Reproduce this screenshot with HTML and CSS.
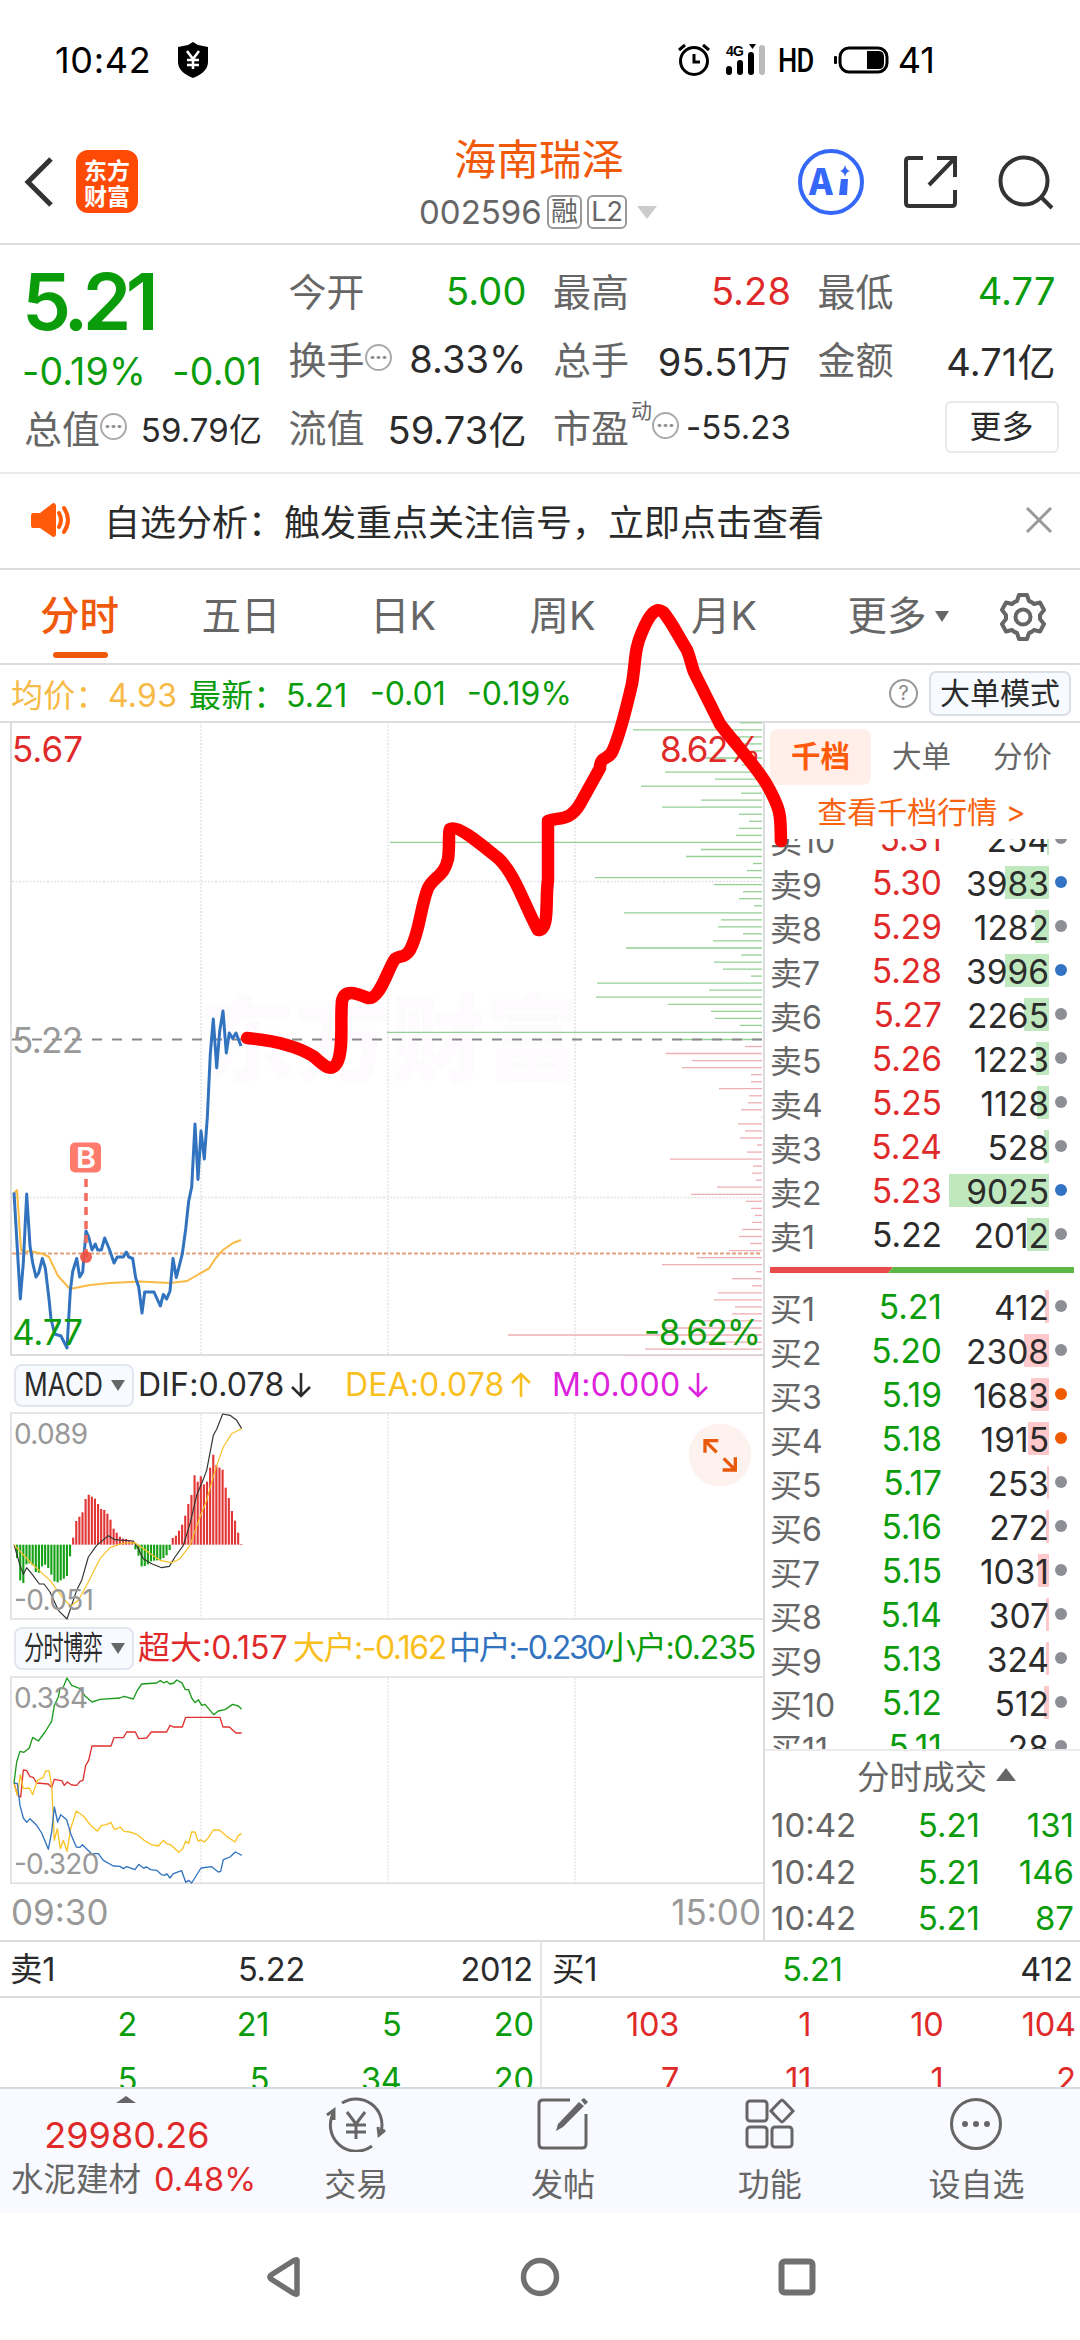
FILE: index.html
```html
<!DOCTYPE html>
<html lang="zh-CN">
<head>
    <meta charset="UTF-8" />
    <meta name="viewport" content="width=device-width, initial-scale=1" />
    <title>海南瑞泽 002596</title>
    <link rel="stylesheet" href="styles.css">
</head>
<body>
<div class="phone">
    <div class="statusbar">
        <div class="status-left">
            <span class="clock">10:42</span>
            <svg width="32" height="36" viewBox="0 0 32 36"><path d="M16 0 L21 3 L31 5 V20 Q31 30 16 36 Q1 30 1 20 V5 L11 3 Z" fill="#000"/><path d="M10 9 L16 17 L22 9 M16 17 V27 M10 18 H22 M10 23 H22" stroke="#fff" stroke-width="2.6" fill="none"/></svg>
        </div>
        <div class="status-right">
            <svg width="34" height="34" viewBox="0 0 34 34" fill="none" stroke="#000" stroke-width="3"><circle cx="17" cy="18" r="13.5"/><path d="M17 11 V19 H23 M2 7 L8 2 M32 7 L26 2"/></svg>
            <svg class="signal" width="42" height="32" viewBox="0 0 42 32"><text x="1" y="12" font-size="14" font-weight="700" textLength="18">4G</text><path d="M24 0 H31 L27.500 5 Z"/><rect x="1" y="22" width="6" height="9" rx="3"/><rect x="12" y="16" width="6" height="15" rx="3"/><rect x="23" y="8" width="6" height="23" rx="3"/><rect x="34" y="1" width="6" height="30" rx="3" fill="#bbb"/></svg>
            <span class="hd">HD</span>
            <svg width="56" height="30" viewBox="0 0 56 30"><rect x="6" y="3" width="47" height="24" rx="9" fill="none" stroke="#000" stroke-width="3"/><path d="M33 6 H45 Q50 6 50 12 V18 Q50 24 45 24 H33 Z"/><rect x="0" y="11" width="3" height="8" rx="1"/></svg>
            <span class="battery">41</span>
        </div>
    </div>

    <div class="titlebar">
        <div class="title-left">
            <svg width="32" height="52" viewBox="0 0 32 52"><path d="M29 3 L6 26 L29 49" fill="none" stroke="#333" stroke-width="5"/></svg>
            <div class="logo"><span>东方</span><span>财富</span></div>
        </div>
        <div class="title-mid">
            <div class="stock-name">海南瑞泽</div>
            <div class="stock-code"><span class="code">002596</span><span class="tag">融</span><span class="tag l2">L2</span><i class="tri-down light"></i></div>
        </div>
        <div class="title-right">
            <svg width="66" height="66" viewBox="0 0 66 66"><circle cx="33" cy="33" r="31" fill="none" stroke="#3568f8" stroke-width="4"/><text x="11" y="46" class="ai" font-size="36">A</text><path d="M43 30 h7 l-1 16 h-8 Z" fill="#3568f8"/><path d="M47 16 Q48 21 52 22 Q48 23 47 28 Q46 23 42 22 Q46 21 47 16 Z" fill="#3568f8"/></svg>
            <svg width="56" height="56" viewBox="0 0 56 56" fill="none" stroke="#333" stroke-width="4"><path d="M20 4 H6 Q3 4 3 7 V49 Q3 52 6 52 H49 Q52 52 52 49 V36 M34 4 H52 V23 M52 4 L26 31"/></svg>
            <svg width="56" height="56" viewBox="0 0 56 56" fill="none" stroke="#333" stroke-width="4"><circle cx="26" cy="27" r="23.500"/><path d="M43 43 L54 54"/></svg>
        </div>
    </div>

    <div class="stats">
        <div class="stats-col">
            <div class="price">5.21</div>
            <div class="change"><span>-0.19%</span><span>-0.01</span></div>
            <div class="stat"><span class="label">总值<i class="dots"></i></span><b class="small">59.79亿</b></div>
        </div>
        <div class="stats-col">
            <div class="stat"><span class="label">今开</span><b class="green">5.00</b></div>
            <div class="stat"><span class="label">换手<i class="dots"></i></span><b>8.33%</b></div>
            <div class="stat"><span class="label">流值</span><b>59.73亿</b></div>
        </div>
        <div class="stats-col">
            <div class="stat"><span class="label">最高</span><b class="red">5.28</b></div>
            <div class="stat"><span class="label">总手</span><b>95.51万</b></div>
            <div class="stat"><span class="label">市盈<sup>动</sup><i class="dots"></i></span><b class="small">-55.23</b></div>
        </div>
        <div class="stats-col">
            <div class="stat"><span class="label">最低</span><b class="green">4.77</b></div>
            <div class="stat"><span class="label">金额</span><b>4.71亿</b></div>
            <div class="stat end"><span class="more-btn">更多</span></div>
        </div>
    </div>

    <div class="notice">
        <svg width="42" height="36" viewBox="0 0 42 36"><path d="M2 11 H9 L22 1 Q25 1 25 4 V32 Q25 35 22 35 L9 26 H2 Q0 26 0 23 V14 Q0 11 2 11 Z" fill="#ff5a0a"/><path d="M28 11 Q32 18 28 25 M33 6 Q41 18 33 30" fill="none" stroke="#ff5a0a" stroke-width="4" stroke-linecap="round"/></svg>
        <span>自选分析：触发重点关注信号，立即点击查看</span>
        <svg width="28" height="28" viewBox="0 0 28 28"><path d="M2 2 L26 26 M26 2 L2 26" stroke="#999" stroke-width="3"/></svg>
    </div>

    <div class="tabs">
        <span class="tab active">分时</span>
        <span class="tab">五日</span>
        <span class="tab">日K</span>
        <span class="tab">周K</span>
        <span class="tab">月K</span>
        <span class="tab more">更多<i class="tri-down"></i></span>
        <svg class="gear" width="50" height="50" viewBox="0 0 50 50" fill="none" stroke="#666" stroke-width="4" stroke-linejoin="round"><path d="M21 3 H29 L31 9 Q34 10 36 12 L42 10.500 L46 18 L42 23 V27 L46 32 L42 39.500 L36 38 Q34 40 31 41 L29 47 H21 L19 41 Q16 40 14 38 L8 39.500 L4 32 L8 27 V23 L4 18 L8 10.500 L14 12 Q16 10 19 9 Z"/><circle cx="25" cy="25" r="7.500"/></svg>
    </div>

    <div class="infobar">
        <span class="avg">均价：4.93</span>
        <span class="last">最新：5.21</span>
        <span class="green diff">-0.01</span>
        <span class="green">-0.19%</span>
        <span class="help">?</span>
        <span class="mode-btn">大单模式</span>
    </div>

    <div class="board">
        <div class="charts">
            <svg class="chart" width="763" height="635" viewBox="0 722 763 635">
                <text class="watermark" x="200" y="1076" textLength="380">东方财富</text>
                <path class="frame" d="M11 722 V1356 H763"/>
                <path class="grid" d="M201 723 V1356 M388 723 V1356 M575 723 V1356 M12 882.500 H763 M12 1198.500 H763"/>
                <g id="depth"></g>
                <path d="M12 1040.500 H762" stroke="#888" stroke-width="2" stroke-dasharray="10 10"/>
                <path d="M12 1254.500 H762" stroke="#e2a27c" stroke-width="2" stroke-dasharray="4 2"/>
                <polyline class="line" stroke="#f9ba45" stroke-width="2" points="14,1194 17,1191 21,1251 25,1253 30,1252 43,1255 49,1258 58,1277 70,1290 90,1286 110,1284 140,1282.500 170,1284 187,1282 199,1275 209,1269.500 215,1260 223,1251 233,1244 241,1241"/>
                <polyline class="line" stroke="#3273bf" stroke-width="3" points="14,1193.500 20.300,1300 23.300,1264 26.700,1195 30,1247 32.700,1264 36,1278 38.700,1274 42.300,1259.500 45.300,1269 49,1300 51,1320 54.700,1335 61,1337 67,1349 70.300,1292 72.700,1272.500 76.700,1259.500 79.700,1278 82.700,1273 86,1232 88.700,1238 92,1251 95.300,1245 97.700,1251 101.300,1251 104.700,1239 109.300,1250 114,1264 117.300,1258 123.300,1258 126.300,1253 128.700,1258 132.700,1259.500 135.700,1279 138.700,1288 142,1314 144.700,1293 154,1293 160.300,1307 163.300,1295.500 166.700,1300 170,1292 173,1259.500 176.300,1278.500 182.300,1255 185.700,1230 188.700,1202 191.700,1188 195,1125 198,1180.500 201,1132 204.300,1160 207.300,1118.500 210.300,1055 213.300,1020 216.700,1069 219.700,1032 223,1012 226.300,1054 229.300,1034 232.700,1039.500 236,1034 241,1047"/>
                <path d="M86 1180 V1258" stroke="#f4695c" stroke-width="3.500" stroke-dasharray="8 6"/>
                <circle cx="86" cy="1258" r="6" fill="#f2503f" fill-opacity=".9"/>
                <rect x="70" y="1143.500" width="31" height="30" rx="5" fill="#ff7b6c"/>
                <text x="76" y="1169" font-size="29" font-weight="600" fill="#fff" textLength="20" lengthAdjust="spacingAndGlyphs">B</text>
                <text x="12" y="763" font-size="35" fill="#e02a2a" textLength="71">5.67</text>
                <text x="12" y="1054" font-size="35" fill="#999" textLength="71">5.22</text>
                <text x="12" y="1346" font-size="35" fill="#0a9c0a" textLength="71">4.77</text>
                <text x="660" y="763" font-size="35" fill="#e02a2a" textLength="101">8.62%</text>
                <text x="644" y="1346" font-size="35" fill="#0a9c0a" textLength="117">-8.62%</text>
            </svg>

            <div class="legend">
                <span class="select"><em>MACD</em><i class="tri-down"></i></span>
                <span class="dif">DIF:0.078<svg class="arr" width="22" height="26" viewBox="0 0 22 26"><path d="M11 1 V24 M2 15 L11 24 L20 15"/></svg></span>
                <span class="dea">DEA:0.078<svg class="arr" width="22" height="26" viewBox="0 0 22 26"><path d="M11 25 V2 M2 11 L11 2 L20 11"/></svg></span>
                <span class="m">M:0.000<svg class="arr" width="22" height="26" viewBox="0 0 22 26"><path d="M11 1 V24 M2 15 L11 24 L20 15"/></svg></span>
            </div>
            <!-- the two small panes use three units per pixel -->
            <svg class="chart" width="763" height="208" viewBox="0 40 2289 624">
                <path class="frame3" d="M2289 43 H33 V661 H2289"/>
                <path class="grid3" d="M603 46 V660 M1164 46 V660 M1725 46 V660"/>
                <g id="macd"></g>
                <polyline class="line" stroke="#333" stroke-width="3.500" points="42,438 60,500 70,527 80,507 95,525 118,556 132,556 150,580 175,635 201,661 230,575 245,545 265,475 290,440 325,411 345,423 400,427 412,445 430,480 455,495 485,507 508,503 525,475 550,440 570,375 590,290 610,242 620,215 640,110 650,92 668,46 690,50 710,65 725,90"/>
                <polyline class="line" stroke="#f9c226" stroke-width="3.500" points="42,438 90,490 150,545 190,600 212,622 235,605 260,560 300,480 330,447 370,433 405,432 430,450 480,485 515,492 540,480 570,440 600,355 620,305 645,215 670,145 695,105 725,90"/>
                <text x="42" y="135" font-size="84" fill="#999" textLength="222">0.089</text>
                <text x="42" y="635" font-size="84" fill="#999" textLength="240">-0.051</text>
                <circle cx="2160" cy="169" r="94" fill="#fdf2ee"/>
                <path d="M2115 162 V126 H2155 M2117 128 L2150 161 M2168 214 H2206 V176 M2204 212 L2171 179" fill="none" stroke="#e8590c" stroke-width="10"/>
            </svg>

            <div class="legend second">
                <span class="select"><em class="cn">分时博弈</em><i class="tri-down"></i></span>
                <span class="c1">超大:0.157</span>
                <span class="c2">大户:-0.162</span>
                <span class="c3">中户:-0.230</span>
                <span class="c4">小户:0.235</span>
            </div>
            <svg class="chart" width="763" height="208" viewBox="0 832 2289 624">
                <path class="frame3" d="M2289 835 H33 V1454 H2289"/>
                <path class="grid3" d="M603 838 V1452 M1164 838 V1452 M1725 838 V1452"/>
                <g class="thin">
                <polyline stroke="#1c9a1c" points="42,1153 50,1090 60,1058 72,1061 88,1048 98,1016 115,1027 135,1000 155,968 163,920 175,895 180,870 190,865 201,838 215,860 240,870 255,892 276,910 300,902 360,898 372,893 400,901 412,875 425,856 470,853 481,846 492,853 500,848 510,856 522,853 530,844 545,852 556,873 566,873 575,898 585,912 595,903 605,920 615,917 641,948 655,937 675,933 698,917 715,922 725,932"/>
                <polyline stroke="#e03030" points="42,1153 53,1190 62,1195 70,1114 80,1116 90,1134 100,1136 110,1153 145,1156 155,1167 163,1142 185,1146 193,1160 202,1150 215,1159 230,1160 240,1148 249,1145 257,1100 266,1085 276,1042 333,1042 342,1017 370,1017 380,1000 406,1000 416,1020 440,1018 454,1000 500,1000 510,980 520,985 547,985 557,956 660,956 669,985 688,985 708,1003 725,1003"/>
                <polyline stroke="#f9c226" points="42,1153 52,1190 61,1128 70,1170 88,1168 98,1188 112,1145 130,1136 137,1117 147,1117 155,1160 163,1325 172,1290 181,1350 190,1325 201,1358 212,1290 229,1237 250,1252 272,1280 292,1297 305,1280 320,1278 333,1271 342,1291 350,1291 361,1285 372,1298 390,1300 412,1308 435,1327 455,1338 475,1342 490,1325 500,1335 510,1338 520,1345 536,1361 548,1350 557,1328 566,1334 575,1300 585,1300 594,1327 603,1324 613,1330 625,1317 640,1294 658,1294 680,1313 705,1330 715,1310 725,1305"/>
                <polyline stroke="#3273bf" points="42,1153 52,1155 60,1220 70,1258 80,1271 90,1260 110,1280 125,1303 145,1352 155,1300 163,1225 173,1270 182,1248 200,1263 212,1305 229,1345 240,1346 247,1338 275,1365 295,1365 310,1385 340,1402 360,1403 370,1410 380,1404 405,1413 416,1397 430,1408 440,1405 452,1413 470,1415 485,1428 495,1430 500,1425 510,1438 520,1425 545,1416 557,1451 566,1445 575,1453 603,1408 635,1404 655,1420 662,1418 670,1383 690,1375 706,1360 718,1366 725,1370"/>
                </g>
                <text x="42" y="927" font-size="84" fill="#999" textLength="222">0.334</text>
                <text x="42" y="1427" font-size="84" fill="#999" textLength="256">-0.320</text>
            </svg>
            <div class="times"><span>09:30</span><span>15:00</span></div>
        </div>

        <div class="book">
            <div class="book-tabs"><span class="active">千档</span><span>大单</span><span>分价</span></div>
            <div class="book-link">查看千档行情 &gt;</div>
            <div class="book-list">
                <div class="asks" id="asks"></div>
                <svg class="ratio" width="304" height="6" viewBox="0 0 304 6"><path d="M0 0 H123 L118 6 H0 Z" fill="#e94b4b"/><path d="M123 0 H304 V6 H118 Z" fill="#5db747"/></svg>
                <div id="bids"></div>
            </div>
            <div class="ticks">
                <div class="ticks-title">分时成交<i class="tri-up"></i></div>
                <div class="tick"><span>10:42</span><b>5.21</b><b>131</b></div>
                <div class="tick"><span>10:42</span><b>5.21</b><b>146</b></div>
                <div class="tick"><span>10:42</span><b>5.21</b><b>87</b></div>
            </div>
        </div>
    </div>

    <div class="queue">
        <div class="queue-side">
            <div class="queue-head"><span>卖1</span><span>5.22</span><span>2012</span></div>
            <div class="queue-grid green"><span>2</span><span>21</span><span>5</span><span>20</span><span>5</span><span>5</span><span>34</span><span>20</span></div>
        </div>
        <div class="queue-side">
            <div class="queue-head"><span>买1</span><span class="green">5.21</span><span>412</span></div>
            <div class="queue-grid red"><span>103</span><span>1</span><span>10</span><span>104</span><span>7</span><span>11</span><span>1</span><span>2</span></div>
        </div>
    </div>

    <div class="toolbar">
        <div class="index">
            <i class="tri-up"></i>
            <div class="index-value">29980.26</div>
            <div class="index-name">水泥建材<span class="red">0.48%</span></div>
        </div>
        <div class="tool">
            <svg width="62" height="56" viewBox="0 0 62 56" fill="none" stroke="#666" stroke-width="3"><path d="M17 7 A26 26 0 0 1 56 36 M60 34 L54 39 L53 31 M47 50 A26 26 0 0 1 9 16 M2 19 L9 14 L9 24"/><path d="M22 16 L31 28 L40 16 M31 28 V43 M21 29 H41 M21 36 H41"/></svg>
            <span>交易</span>
        </div>
        <div class="tool">
            <svg width="54" height="56" viewBox="0 0 54 56" fill="none" stroke="#666" stroke-width="3"><path d="M34 4 H7 Q3 4 3 8 V48 Q3 52 7 52 H46 Q50 52 50 48 V18"/><path d="M20 35 L22 28 L43 6 L48 10 L27 31 Z" fill="#666" stroke="none"/><path d="M45 4 L48 2 L52 6 L49 9 Z" fill="#666" stroke="none"/></svg>
            <span>发帖</span>
        </div>
        <div class="tool">
            <svg width="52" height="56" viewBox="0 0 52 56" fill="none" stroke="#666" stroke-width="3"><rect x="3" y="5" width="20" height="20" rx="3"/><rect x="3" y="31" width="20" height="20" rx="3"/><rect x="28" y="31" width="20" height="20" rx="3"/><path d="M38 4 Q39 4 49 15 Q39 26 38 26 Q37 26 27 15 Q37 4 38 4 Z"/></svg>
            <span>功能</span>
        </div>
        <div class="tool">
            <svg width="54" height="56" viewBox="0 0 54 56"><circle cx="27" cy="28" r="24.500" fill="none" stroke="#666" stroke-width="3"/><g fill="#666"><circle cx="16" cy="28" r="3"/><circle cx="27" cy="28" r="3"/><circle cx="38" cy="28" r="3"/></g></svg>
            <span>设自选</span>
        </div>
    </div>

    <div class="navbar">
        <svg width="36" height="42" viewBox="0 0 36 42"><path d="M31 4 V38 Q30 39 27 37 L5 23 Q3 21 5 19 L27 5 Q30 3 31 4 Z" fill="none" stroke="#707070" stroke-width="5.500" stroke-linejoin="round"/></svg>
        <svg width="40" height="40" viewBox="0 0 40 40"><circle cx="20" cy="20" r="16.500" fill="none" stroke="#707070" stroke-width="5.500"/></svg>
        <svg width="38" height="38" viewBox="0 0 38 38"><rect x="3.500" y="3.500" width="31" height="31" rx="3" fill="none" stroke="#707070" stroke-width="6"/></svg>
    </div>

    <!-- hand-drawn forecast over the chart -->
    <svg class="forecast" width="1080" height="2340" viewBox="0 0 1080 2340"><path d="M247 1038 C270 1040 295 1045 313 1056 C322 1063 330 1074 337 1063 C344 1050 340 1020 342 1001 C345 987 360 995 368 998 C380 1000 388 968 395 959 C400 955 404 959 410 950 C420 932 420 908 428 888 C434 876 444 877 448 859 C450 845 448 832 450 829 C458 824 484 847 498 858 C515 873 526 909 538 930 C550 930 545 900 548 880 L548 821 C560 817 570 821 580 804 L600 768 C600 755 609 761 613 750 C622 729 628 700 632 684 C636 660 634 650 642 632 C650 613 656 607 663 612 C670 619 680 639 687 650 C691 660 691 664 694 672 L720 724 C730 738 757 767 767 785 C783 813 780 818 781 841"/></svg>
</div>
<script src="script.js"></script>
</body>
</html>
```
FILE: styles.css
```css
:root {
    --green: #0a9c0a;
    --red: #e02a2a;
    --orange: #f0590a;
    --text: #2b2b2b;
    --muted: #666;
    --rule: #dcdcde;
}

* {
    box-sizing: border-box;
}

body {
    margin: 0;
    background: #fff;
    color: var(--text);
    font-family: Inter, "Noto Sans CJK SC", sans-serif;
}

b, i, em {
    font-weight: 400;
    font-style: normal;
}

svg {
    display: block;
    flex: none;
}

.green { color: var(--green); }
.red { color: var(--red); }

.phone {
    position: relative;
    width: 1080px;
    height: 2340px;
    overflow: hidden;
    white-space: nowrap;
}

.tri-down {
    display: block;
    border: 7px solid transparent;
    border-top: 11px solid #666;
    border-bottom: 0;
}

.tri-down.light {
    border-width: 13px 10px 0;
    border-top-color: #ccc;
}

.tri-up {
    display: block;
    border: 10px solid transparent;
    border-bottom: 13px solid #666;
    border-top: 0;
}

/* status bar */
.statusbar {
    display: flex;
    justify-content: space-between;
    height: 120px;
    padding: 0 145px 0 55px;
    font-size: 36px;
    color: #000;
}

.status-left, .status-right {
    display: flex;
    align-items: center;
}

.clock {
    width: 122px;
    letter-spacing: 0.7px;
}

.status-right svg:first-child { margin-right: 14px; }
.signal { font-family: "Liberation Sans", sans-serif; }

.hd {
    font-family: Roboto, sans-serif;
    font-size: 34px;
    width: 54px;
    padding-left: 11px;
    margin-right: 13px;
    letter-spacing: -1px;
    font-weight: 500;
    transform: scaleX(.8);
    transform-origin: 11px 50%;
}

.battery {
    margin-left: 8px;
    letter-spacing: 0;
}

/* title bar */
.titlebar {
    display: flex;
    justify-content: space-between;
    height: 125px;
    padding: 0 26px 0 22px;
    border-bottom: 2px solid var(--rule);
}

.title-left, .title-right {
    display: flex;
    align-items: center;
    width: 260px;
    height: 123px;
}

.title-right {
    justify-content: space-between;
    width: 258px;
    padding-left: 2px;
}

.logo {
    display: flex;
    flex-direction: column;
    align-items: center;
    justify-content: center;
    width: 62px;
    height: 63px;
    margin-left: 22px;
    border-radius: 12px;
    background: #ff4a06;
    color: #fff;
    font: 700 23px/26px "Noto Sans CJK SC", sans-serif;
}

.title-mid {
    padding: 13px 0 0 0;
    width: 240px;
}

.stock-name {
    font-size: 42.5px;
    line-height: 54px;
    text-align: center;
    color: var(--orange);
}

.stock-code {
    display: flex;
    align-items: center;
    height: 50px;
    color: var(--muted);
    font-size: 33px;
}

.code {
    width: 128px;
    letter-spacing: 0;
}

.tag {
    width: 35px;
    height: 34px;
    border: 2px solid #999;
    border-radius: 6px;
    font-size: 27px;
    line-height: 30px;
    text-align: center;
}

.tag.l2 {
    width: 40px;
    margin: 0 10px 0 5px;
}

.ai {
    font-family: "Noto Sans CJK SC", sans-serif;
    font-weight: 900;
    fill: #3568f8;
}

/* quote numbers */
.stats {
    display: flex;
    gap: 26.5px;
    height: 229px;
    padding: 12px 22px 0 24px;
    border-bottom: 2px solid #ebebed;
}

.stats-col { width: 238px; }

.price {
    height: 89px;
    margin-left: -2px;
    font-size: 78px;
    font-weight: 600;
    line-height: 89px;
    letter-spacing: -5.6px;
    color: var(--green);
}

.change {
    display: flex;
    justify-content: space-between;
    height: 48px;
    margin-left: -2px;
    padding-top: 2px;
    font-size: 37.5px;
    line-height: 48px;
    letter-spacing: 0.2px;
    color: var(--green);
}

.stat {
    display: flex;
    align-items: center;
    justify-content: space-between;
    height: 68px;
    font-size: 38px;
}

.stat b { letter-spacing: 0.1px; }

.stat b.small {
    font-size: 33px;
    letter-spacing: 0.1px;
}

.stat.end { justify-content: flex-end; }

.label {
    display: flex;
    align-items: center;
    margin-top: -3px;
    color: var(--muted);
}

.label sup {
    align-self: flex-start;
    margin-top: 1px;
    padding-left: 2px;
    font-size: 21px;
    line-height: 24px;
}

.dots {
    width: 27px;
    height: 27px;
    border: 2px solid #aaa;
    border-radius: 50%;
    background: radial-gradient(circle, #888 1.4px, transparent 2px) center / 6px 23px repeat-x;
    background-clip: content-box;
    padding: 0 3px;
}

.more-btn {
    width: 114px;
    height: 52px;
    border: 2px solid #e8e8ea;
    border-radius: 6px;
    font-size: 32px;
    line-height: 48px;
    text-align: center;
    margin-right: -3px;
}

.notice {
    display: flex;
    align-items: center;
    height: 96px;
    padding: 0 27px 2px 31px;
    border-bottom: 2px solid var(--rule);
    font-size: 36px;
}

.notice span {
    flex: 1;
    padding-left: 31px;
}

/* period tabs */
.tabs {
    display: flex;
    align-items: center;
    height: 95px;
    padding: 0 32px 0 40px;
    border-bottom: 2px solid var(--rule);
    font-size: 39.5px;
    color: var(--muted);
}

.tab {
    position: relative;
    width: 161.5px;
    line-height: 93px;
}

.tab:nth-child(3) { padding-left: 7px; }
.tab:nth-child(4) { padding-left: 5px; }
.tab:nth-child(5) { padding-left: 5px; }

.tab.active {
    color: var(--orange);
    font-weight: 500;
}

.tab.active::after {
    content: '';
    position: absolute;
    left: 13px;
    bottom: 5px;
    width: 55px;
    height: 6px;
    border-radius: 3px;
    background: var(--orange);
}

.tab.more {
    display: flex;
    align-items: center;
    gap: 8px;
    width: 150px;
}

.infobar {
    display: flex;
    align-items: center;
    height: 58px;
    padding: 0 9px 0 11px;
    border-bottom: 2px solid var(--rule);
    font-size: 32px;
}

.avg {
    width: 178px;
    letter-spacing: 0.3px;
    color: #f7ba46;
}

.last {
    width: 181px;
    letter-spacing: 0.3px;
    color: var(--green);
}

.infobar .diff { width: 97px; }

.help {
    width: 29px;
    height: 29px;
    margin-left: auto;
    border: 2px solid #999;
    border-radius: 50%;
    color: #888;
    font-size: 20px;
    line-height: 25px;
    text-align: center;
}

.mode-btn {
    width: 142px;
    height: 45px;
    margin-left: 11px;
    border: 2px solid #dcdfe8;
    border-radius: 7px;
    background: #f7faff;
    font-size: 30px;
    line-height: 41px;
    text-align: center;
}

/* charts and order book */
.board {
    display: flex;
    height: 1217px;
}

.charts {
    width: 763px;
    margin-top: -2px;
}

.chart text { font-family: Inter, "Noto Sans CJK SC", sans-serif; }

.chart .watermark {
    font-size: 95px;
    font-weight: 900;
    fill: #fefbfe;
}

.frame, .frame3 {
    fill: none;
    stroke: #dedee0;
    stroke-width: 2;
}

.grid {
    fill: none;
    stroke: #e3e3e3;
    stroke-width: 1.5;
    stroke-dasharray: 2 1.5;
}

.frame3 { stroke-width: 5; }

.grid3 {
    stroke: #e3e3e3;
    stroke-width: 4;
    stroke-dasharray: 6 4;
}

.line, .thin polyline {
    fill: none;
    stroke-linejoin: round;
}

.thin polyline { stroke-width: 4; }

.legend {
    display: flex;
    align-items: center;
    height: 56px;
    padding: 2px 0 0 14px;
    font-size: 32px;
    line-height: 40px;
}

.legend > span {
    display: flex;
    align-items: center;
    gap: 6px;
}

.legend .select {
    justify-content: space-between;
    width: 120px;
    height: 43px;
    margin-right: 4px;
    padding: 0 7px 0 8px;
    border: 2px solid #e3e6ef;
    border-radius: 8px;
    background: #f7faff;
}

.select em {
    width: 80px;
    transform: scaleX(.82);
    transform-origin: 0 50%;
}

.select em.cn { transform: scaleX(.63); }

.arr {
    fill: none;
    stroke: currentColor;
    stroke-width: 2.6;
}

.dif { width: 207px; letter-spacing: 0.2px; }
.dea { width: 207px; color: #f9bf1e; letter-spacing: 0.1px; }
.m { color: #dc22dc; letter-spacing: 0.3px; }

.legend.second {
    height: 56px;
    padding-top: 0;
}

.second .select { letter-spacing: -0.9px; }
.c1 { width: 155px; color: var(--red); }
.c2 { width: 156px; color: #f9bf1e; letter-spacing: -1.5px; }
.c3 { width: 155px; color: #3273bf; letter-spacing: -2.3px; }
.c4 { color: var(--green); letter-spacing: -1.2px; }

.times {
    display: flex;
    justify-content: space-between;
    padding: 0 2px 0 11px;
    font-size: 35px;
    line-height: 56px;
    letter-spacing: 0;
    color: #999;
}

.book {
    width: 317px;
    border-left: 2px solid var(--rule);
}

.book-tabs {
    display: flex;
    height: 62px;
    padding: 6px 5px 0;
    font-size: 29.5px;
    line-height: 55px;
    text-align: center;
    color: var(--muted);
}

.book-tabs span { width: 101px; }

.book-tabs .active {
    border-radius: 8px;
    background: #ffefe8;
    color: #ff5a0a;
    font-weight: 700;
}

.book-link {
    height: 54px;
    font-size: 30px;
    line-height: 54px;
    text-align: center;
    color: #f8620e;
    padding-right: 2px;
}

.book-list {
    height: 910px;
    overflow: hidden;
    padding-left: 5px;
}

.asks { margin-top: -23px; }

.ratio { margin: 11px 0; }

.level {
    display: flex;
    align-items: center;
    height: 44px;
    font-size: 33.5px;
    letter-spacing: 0;
}

.level .name {
    width: 82px;
    font-size: 32px;
    color: var(--muted);
}

.level .name, .level .px, .level .qty { padding-top: 2px; }

.level .px {
    width: 90px;
    text-align: right;
}

.level .vol {
    display: flex;
    justify-content: flex-end;
    width: 107px;
    height: 33px;
    line-height: 33px;
    background: linear-gradient(var(--bar), var(--bar)) no-repeat right / var(--len) 100%;
}

.level .dot {
    width: 12px;
    height: 12px;
    margin-left: 6px;
    border-radius: 50%;
    background: #8e8e96;
}

.level .dot.blue { background: #3273c4; }
.level .dot.orange { background: #f05a00; }

.ticks { border-top: 2px solid #ebebed; }

.ticks-title {
    display: flex;
    align-items: center;
    justify-content: center;
    gap: 9px;
    height: 51px;
    padding: 0 0 4px 28px;
    font-size: 32.5px;
    color: var(--muted);
}

.tick {
    display: grid;
    grid-template-columns: 110px 99px 94px;
    height: 46.5px;
    padding-left: 6px;
    font-size: 33px;
    line-height: 46px;
    text-align: right;
    color: var(--green);
}

.tick span {
    text-align: left;
    color: var(--muted);
}

/* queue table */
.queue {
    display: flex;
    height: 147px;
    border-top: 2px solid var(--rule);
    overflow: hidden;
    font-size: 32.5px;
    letter-spacing: -0.2px;
}

.queue-side { width: 540px; }
.queue-side + .queue-side { border-left: 2px solid #e6e6e6; }

.queue-head {
    display: grid;
    grid-template-columns: 1fr 1fr 1fr;
    height: 56px;
    padding: 0 7px 0 10px;
    border-bottom: 2px solid var(--rule);
    line-height: 56px;
    text-align: center;
}

.queue-head span:first-child { text-align: left; }
.queue-head span:last-child { text-align: right; }

.queue-grid {
    display: grid;
    grid-template-columns: repeat(4, 132.2px);
    padding: 0 0 0 5px;
    line-height: 54.5px;
    text-align: right;
}

/* bottom toolbar */
.toolbar {
    display: flex;
    height: 126px;
    border-top: 2px solid #d5d9e2;
    background: #f8faff;
    color: var(--muted);
}

.index {
    width: 253px;
    padding: 7px 0 0 11px;
}

.index .tri-up {
    width: 0;
    margin-left: 105px;
    border-width: 0 10px 7px;
}

.index-value {
    width: 232px;
    font-size: 36px;
    line-height: 44px;
    margin-top: 10px;
    text-align: center;
    color: var(--red);
}

.index-name {
    font-size: 32.5px;
    line-height: 45px;
}

.index-name span { margin-left: 13px; }

.tool {
    display: flex;
    flex-direction: column;
    align-items: center;
    width: 206.7px;
    padding-top: 7px;
    font-size: 32px;
    line-height: 46px;
}

.tool span { padding-top: 10px; }

.navbar {
    display: flex;
    align-items: center;
    justify-content: space-between;
    height: 127px;
    padding: 0 264px 0 266px;
}

.forecast {
    position: absolute;
    left: 0;
    top: 0;
    pointer-events: none;
    fill: none;
    stroke: #fe0000;
    stroke-width: 12.5;
    stroke-linecap: round;
    stroke-linejoin: round;
}
```
FILE: script.js
```js
const asks = [
    ['卖10', '5.31', 254, 2], ['卖9', '5.30', 3983, 44, 'blue'], ['卖8', '5.29', 1282, 14],
    ['卖7', '5.28', 3996, 44, 'blue'], ['卖6', '5.27', 2265, 25], ['卖5', '5.26', 1223, 13],
    ['卖4', '5.25', 1128, 12], ['卖3', '5.24', 528, 5], ['卖2', '5.23', 9025, 100, 'blue'],
    ['卖1', '5.22', 2012, 22]
];
const bids = [
    ['买1', '5.21', 412, 4], ['买2', '5.20', 2308, 25], ['买3', '5.19', 1683, 18, 'orange'],
    ['买4', '5.18', 1915, 21, 'orange'], ['买5', '5.17', 253, 2], ['买6', '5.16', 272, 3],
    ['买7', '5.15', 1031, 11], ['买8', '5.14', 307, 3], ['买9', '5.13', 324, 3],
    ['买10', '5.12', 512, 5], ['买11', '5.11', 28, 0]
];

function renderLevels(id, rows, bar, priceClass) {
    document.getElementById(id).innerHTML = rows.map(([name, px, qty, len, dot]) => `
        <div class="level">
            <span class="name">${name}</span>
            <span class="px ${px === '5.22' ? '' : priceClass}">${px}</span>
            <span class="vol" style="--bar:${bar};--len:${len}px"><span class="qty">${qty}</span></span>
            <i class="dot ${dot || ''}"></i>
        </div>`).join('');
}
renderLevels('asks', asks, '#bfe8bf', 'red');
renderLevels('bids', bids, '#ffc9cc', 'green');

// resting volume per price, top of the chart to the bottom
const depth = [
    22, 129, 29, 32, 9, 57, 20, 97, 47, 121, 21, 61, 100, 23, 13, 23, 26, 372, 61, 76, 9, 15, 167, 48, 19, 23, 8,
    138, 41, 44, 19, 49, 136, 21, 48, 39, 11, 165, 53, 166, 94, 51, 47, 22, 375, 84,
    17, 96, 70, 80, 11, 11, 43, 13, 14, 21, 1, 24, 17, 22, 5, 15, 92, 9, 10, 6, 45, 71, 16, 11, 7, 10, 20, 23,
    12, 33, 65, 100, 6, 30, 10, 44, 48, 27, 30, 69, 99, 254, 69, 117, 139
];
document.getElementById('depth').innerHTML = depth.map((len, i) => {
    const y = 723.8 + i * 7.037;
    return `<path d="M${762 - len} ${y.toFixed(1)} H762" stroke="${i < 46 ? '#95d095' : '#efaeb2'}" stroke-width="1.3"/>`;
}).join('');

// MACD histogram, positive bars rise from the zero line
const macd = [
    0, -40, -107, -115, -59, -56, -62, -82, -84, -65, -60, -70, -90, -110, -113, -107, -102, -94, -35,
    21, 71, 84, 97, 137, 150, 144, 138, 122, 107, 104, 93, 75, 48, 36, 24, 18, 17, 13, 10,
    -14, -33, -65, -64, -59, -50, -48, -47, -45, -40, -32, -16,
    20, 27, 42, 60, 87, 122, 149, 208, 189, 205, 181, 189, 231, 270, 239, 231, 225, 171, 140, 101, 72, 36, 2
];
document.getElementById('macd').innerHTML = macd.map((v, i) => {
    const x = 42 + i * 9.34;
    return `<rect x="${(x - 3.2).toFixed(1)}" y="${v > 0 ? 438 - v : 438}" width="6.4" height="${Math.abs(v)}" fill="${v > 0 ? '#e23636' : '#16a016'}"/>`;
}).join('');
```
